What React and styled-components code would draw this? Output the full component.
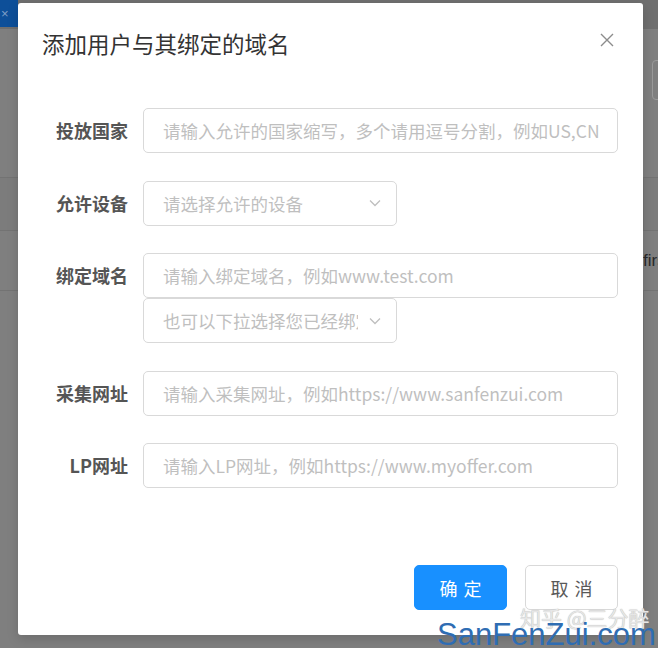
import React from "react";
import styled, { createGlobalStyle } from "styled-components";

const GlobalStyle = createGlobalStyle`
  html, body {
    margin: 0;
    padding: 0;
  }
  body {
    font-family: "Noto Sans CJK SC", "Noto Sans", sans-serif;
  }
  * {
    box-sizing: border-box;
  }
`;

const Page = styled.div`
  position: relative;
  width: 658px;
  height: 648px;
  overflow: hidden;
  background: #7f7f7f;
`;

// the app behind the mask, already dimmed
const Backdrop = styled.div`
  display: flex;
  flex-direction: column;
  height: 100%;
`;

const TopBar = styled.div`
  height: 29px;
  background: #6f6f6f;
  display: flex;
  align-items: flex-start;
`;

const Tab = styled.div`
  width: 18px;
  height: 27px;
  background: #0d4f99;
  color: #7f9fc8;
  font-size: 13px;
  line-height: 27px;
  padding-left: 1px;
  font-family: "Liberation Sans", sans-serif;
`;

const Toolbar = styled.div`
  height: 148px;
  display: flex;
  justify-content: flex-end;
  padding-top: 31px;
`;

const GhostButton = styled.div`
  width: 60px;
  height: 40px;
  margin-right: -54px;
  border: 1px solid #9a9a9a;
  border-radius: 4px;
`;

const TableRow = styled.div`
  height: ${(p) => p.h}px;
  display: grid;
  grid-template-columns: 1fr 15px;
  border-top: 1px solid #737373;
  background: ${(p) => (p.head ? "#7c7c7c" : "transparent")};
`;

const Cell = styled.div`
  display: flex;
  align-items: center;
  white-space: nowrap;
  font-family: "Liberation Sans", sans-serif;
  font-size: 17px;
  color: #2a2a2a;
  border-left: ${(p) => (p.edge ? "1px solid #747474" : "none")};
`;

// dialog
const Dialog = styled.div`
  position: absolute;
  left: 18px;
  top: 3px;
  width: 625px;
  height: 632px;
  background: #fff;
  border-radius: 3px;
  box-shadow: 0 4px 12px rgba(0, 0, 0, 0.15);
  display: flex;
  flex-direction: column;
`;

const Header = styled.div`
  height: 80px;
  display: flex;
  align-items: center;
  justify-content: space-between;
  padding: 0 29px 0 24px;
`;

const Title = styled.h2`
  margin: 0;
  font-size: 22.5px;
  font-weight: 400;
  color: #333;
  line-height: 1;
`;

const Close = styled.button`
  border: none;
  background: none;
  padding: 0;
  margin-top: -6px;
  width: 14px;
  height: 14px;
  display: flex;
  cursor: pointer;
`;

const Body = styled.form`
  padding: 25px 25px 0 0;
`;

const FormItem = styled.div`
  display: flex;
  align-items: flex-start;
  margin-bottom: 27.5px;
`;

const Label = styled.label`
  width: 125px;
  flex-shrink: 0;
  padding-right: 15px;
  text-align: right;
  height: 45px;
  line-height: 45px;
  font-size: 18px;
  font-weight: 700;
  color: #555;
  white-space: nowrap;
`;

const Control = styled.div`
  flex: 1;
  display: flex;
  flex-direction: column;
  align-items: flex-start;
`;

const Input = styled.input`
  width: 100%;
  height: 45px;
  border: 1px solid #d9d9d9;
  border-radius: 5px;
  padding: 0 14px 0 19px;
  font-size: 17.5px;
  font-family: inherit;
  color: #333;
  outline: none;
  &::placeholder {
    color: #bfbfbf;
  }
`;

const Select = styled.div`
  width: 254px;
  height: 45px;
  border: 1px solid #d9d9d9;
  border-radius: 5px;
  padding: 0 15px 0 19px;
  display: flex;
  align-items: center;
  font-size: 17.5px;
  color: #bfbfbf;
`;

const SelectText = styled.span`
  flex: 1;
  overflow: hidden;
  white-space: nowrap;
`;

const Chevron = styled.svg`
  flex-shrink: 0;
  margin-left: 11px;
`;

const Footer = styled.div`
  margin-top: auto;
  display: flex;
  justify-content: flex-end;
  gap: 18px;
  padding: 0 25px 25px 0;
`;

const Button = styled.button`
  width: 93px;
  height: 45px;
  border-radius: 5px;
  font-family: inherit;
  font-size: 18px;
  letter-spacing: 6px;
  padding: 0 0 0 6px;
  cursor: pointer;
  background: ${(p) => (p.primary ? "#1890ff" : "#fff")};
  color: ${(p) => (p.primary ? "#fff" : "#595959")};
  border: 1px solid ${(p) => (p.primary ? "#1890ff" : "#d9d9d9")};
`;

// watermarks lie over everything
const ZhihuMark = styled.div`
  position: absolute;
  left: 520px;
  top: 607px;
  font-size: 21px;
  line-height: 1;
  color: #e6e6e6;
  text-shadow: 0 0 1px #a5a5a5;
  white-space: nowrap;
`;

const SiteMark = styled.div`
  position: absolute;
  left: 437px;
  top: 619px;
  font-family: "Liberation Sans", sans-serif;
  font-size: 31px;
  line-height: 1;
  color: #2f6db3;
  white-space: nowrap;
`;

const ChevronIcon = () => (
  <Chevron width="12" height="8" viewBox="0 0 12 8">
    <path d="M1 1.5 L6 6.5 L11 1.5" fill="none" stroke="#bfbfbf" strokeWidth="1.3" />
  </Chevron>
);

const fields = [
  { label: "投放国家", placeholder: "请输入允许的国家缩写，多个请用逗号分割，例如US,CN" },
  { label: "允许设备", select: "请选择允许的设备" },
  {
    label: "绑定域名",
    placeholder: "请输入绑定域名，例如www.test.com",
    select: "也可以下拉选择您已经绑定的域名",
  },
  { label: "采集网址", placeholder: "请输入采集网址，例如https://www.sanfenzui.com" },
  { label: "LP网址", placeholder: "请输入LP网址，例如https://www.myoffer.com" },
];

export default function App() {
  return (
    <Page>
      <GlobalStyle />
      <Backdrop>
        <TopBar>
          <Tab>×</Tab>
        </TopBar>
        <Toolbar>
          <GhostButton />
        </Toolbar>
        <TableRow h={53} head>
          <Cell />
          <Cell edge />
        </TableRow>
        <TableRow h={60}>
          <Cell />
          <Cell>first</Cell>
        </TableRow>
        <TableRow h={60}>
          <Cell />
          <Cell edge />
        </TableRow>
      </Backdrop>

      <Dialog>
        <Header>
          <Title>添加用户与其绑定的域名</Title>
          <Close type="button" aria-label="close">
            <svg width="14" height="14" viewBox="0 0 14 14">
              <path d="M1 1 L13 13 M13 1 L1 13" stroke="#8c8c8c" strokeWidth="1.4" fill="none" />
            </svg>
          </Close>
        </Header>
        <Body onSubmit={(e) => e.preventDefault()}>
          {fields.map((f) => (
            <FormItem key={f.label}>
              <Label>{f.label}</Label>
              <Control>
                {f.placeholder && <Input placeholder={f.placeholder} />}
                {f.select && (
                  <Select>
                    <SelectText>{f.select}</SelectText>
                    <ChevronIcon />
                  </Select>
                )}
              </Control>
            </FormItem>
          ))}
        </Body>
        <Footer>
          <Button primary>确定</Button>
          <Button>取消</Button>
        </Footer>
      </Dialog>

      <ZhihuMark>知乎 @三分醉</ZhihuMark>
      <SiteMark>SanFenZui.com</SiteMark>
    </Page>
  );
}
